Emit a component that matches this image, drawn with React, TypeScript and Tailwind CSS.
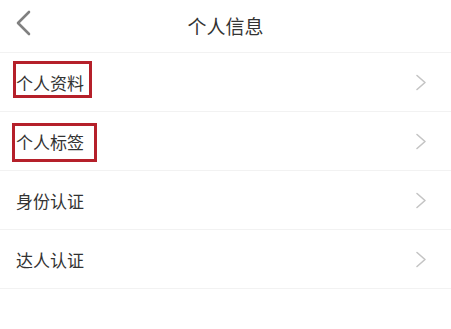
import React from "react";

const rows = ["个人资料", "个人标签", "身份认证", "达人认证"];

function Chevron() {
  return (
    <svg width="12" height="17" viewBox="0 0 12 17" fill="none">
      <path d="M2 1.5 L10 8.5 L2 15.5" stroke="#c4c4c4" strokeWidth="1.6" strokeLinecap="round" strokeLinejoin="round" />
    </svg>
  );
}

export default function App() {
  return (
    <div
      className="relative w-[451px] h-[329px] bg-white overflow-hidden"
      style={{ fontFamily: '"Noto Sans CJK SC", "Noto Sans", sans-serif' }}
    >
      <div className="relative h-[53px] flex items-center justify-center border-b border-[#f2f2f2]">
        <svg className="absolute left-[14px] top-[10px]" width="18" height="26" viewBox="0 0 18 26" fill="none">
          <path d="M15 2 L4 13 L15 24" stroke="#808080" strokeWidth="2.6" strokeLinecap="round" strokeLinejoin="round" />
        </svg>
        <span className="text-[19px] text-[#333] leading-none -mt-[2px]">个人信息</span>
      </div>
      {rows.map((r) => (
        <div key={r} className="h-[59px] flex items-center justify-between pl-[16px] pr-[24px] border-b border-[#f2f2f2]">
          <span className="text-[17px] text-[#333] leading-none">{r}</span>
          <Chevron />
        </div>
      ))}
      <div className="absolute left-[13px] top-[61px] w-[79px] h-[37px] border-[3px] border-[#b5202a]" />
      <div className="absolute left-[12px] top-[123px] w-[85px] h-[39px] border-[3px] border-[#b5202a]" />
    </div>
  );
}
